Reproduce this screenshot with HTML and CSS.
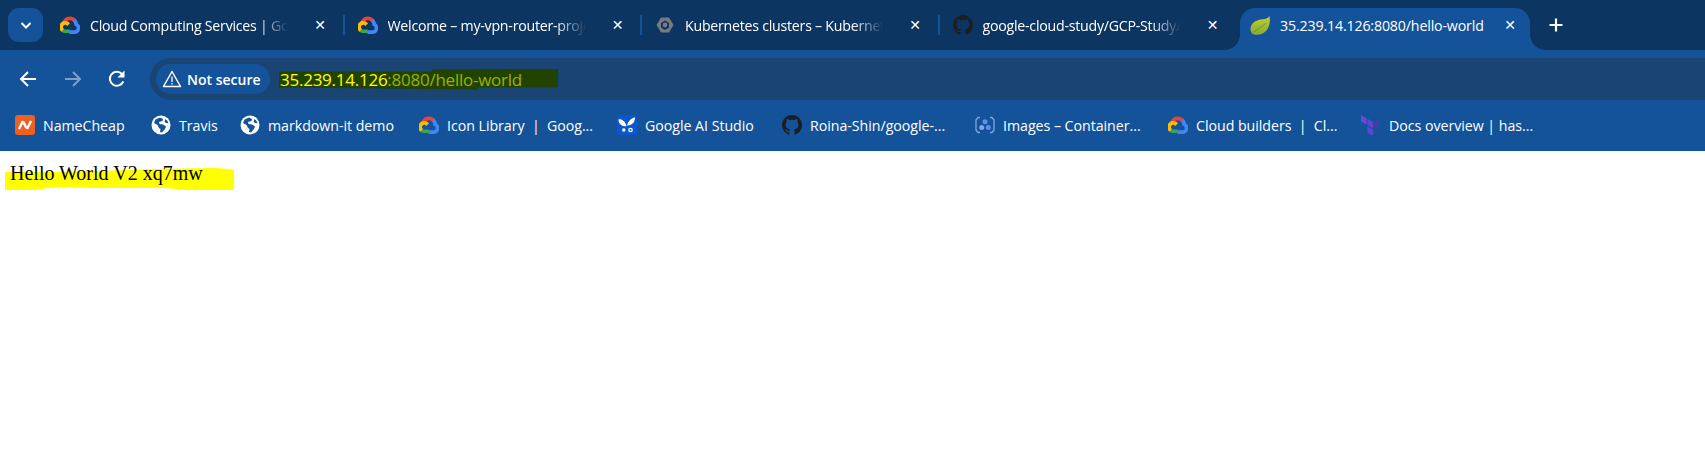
FILE: index.html
```html
<!DOCTYPE html>
<html lang="en">
<head>
<meta charset="utf-8">
<title>35.239.14.126:8080/hello-world</title>
<link rel="stylesheet" href="styles.css">
</head>
<body>
<svg class="defs" width="0" height="0" aria-hidden="true">
  <defs>
    <symbol id="gcloud" viewBox="0 0 20 20">
      <path d="M12.6 6.3l.9 0 1.9-1.900.1-.8A8.300 8.300 0 0 0 2 7.600c.2-.1.7 0 .7 0l3.700-.6s.2-.3.3-.3a4.600 4.600 0 0 1 5.900-.4z" fill="#ea4335"/>
      <path d="M17.900 7.800a8.300 8.300 0 0 0-2.500-4l-2.700 2.700a4.600 4.600 0 0 1 1.700 3.700v.5a2.300 2.300 0 1 1 0 4.600H9.800l-.5.500v2.800l.5.500h4.600a6 6 0 0 0 3.500-10.800z" fill="#4285f4"/>
      <path d="M5.200 18.100h4.600v-3.700H5.200a2.300 2.300 0 0 1-1-.2l-.6.200-1.900 1.800-.2.600a6 6 0 0 0 3.700 1.300z" fill="#34a853"/>
      <path d="M5.200 6.100a6 6 0 0 0-3.700 10.700l2.700-2.700a2.300 2.300 0 1 1 3.100-3.100l2.700-2.700a6 6 0 0 0-4.800-2.200z" fill="#fbbc05"/>
    </symbol>
    <symbol id="globe" viewBox="0 0 20 20">
      <circle cx="10" cy="10" r="9.500" fill="#fff"/>
      <path d="M9 2.500 4.500 4.500 3 8l3.500 2 1.500 3 1.500 1L9 17l2 .5 3-3.500 1-2.500-3-2-3.500-.5L8 7l3.500-1 .5-2zM14.500 4l-1 2.500 1.500 1.500 2.500.2A8 8 0 0 0 14.500 4z" fill="#14539a"/>
    </symbol>
    <symbol id="github" viewBox="0 0 16 16">
      <path fill="#1b1f24" d="M8 0C3.580 0 0 3.580 0 8c0 3.540 2.290 6.530 5.470 7.590.4.070.55-.17.55-.38 0-.19-.01-.82-.01-1.490-2.010.37-2.530-.49-2.690-.94-.09-.23-.48-.94-.82-1.130-.28-.15-.68-.52-.01-.53.63-.01 1.080.58 1.230.82.720 1.210 1.870.87 2.330.66.070-.52.280-.87.510-1.070-1.780-.2-3.640-.89-3.640-3.950 0-.87.310-1.590.820-2.150-.08-.2-.36-1.020.08-2.120 0 0 .67-.21 2.200.82a7.500 7.500 0 0 1 4 0c1.530-1.040 2.200-.82 2.200-.82.440 1.100.16 1.920.08 2.120.51.560.82 1.270.82 2.150 0 3.070-1.870 3.750-3.650 3.950.29.250.54.730.54 1.480 0 1.070-.01 1.930-.01 2.200 0 .21.150.46.550.38A8.010 8.010 0 0 0 16 8c0-4.420-3.580-8-8-8z"/>
    </symbol>
  </defs>
</svg>

<header class="chrome">
  <div class="tabstrip">
    <button class="tab-menu" aria-label="Search tabs">
      <svg width="14" height="14" viewBox="0 0 14 14"><path d="M2.500 5l4.500 4.500L11.500 5" fill="none" stroke="#fff" stroke-width="2"/></svg>
    </button>
    <div class="tab tab-sep">
      <svg class="favicon"><use href="#gcloud"/></svg>
      <span class="tab-title">Cloud Computing Services | Goo</span>
      <span class="tab-close">✕</span>
    </div>
    <div class="tab tab-sep">
      <svg class="favicon"><use href="#gcloud"/></svg>
      <span class="tab-title">Welcome – my-vpn-router-proje</span>
      <span class="tab-close">✕</span>
    </div>
    <div class="tab tab-sep">
      <svg class="favicon" viewBox="0 0 20 20"><path d="M6 2.500h8l4.500 7.500-4.500 7.500H6L1.500 10z" fill="#77797c"/><path d="M10 5.500 14 8v4.500L10 15l-4-2.500V8z" fill="#0d3562"/><circle cx="10" cy="10" r="2.400" fill="#77797c"/></svg>
      <span class="tab-title">Kubernetes clusters – Kubernete</span>
      <span class="tab-close">✕</span>
    </div>
    <div class="tab">
      <svg class="favicon"><use href="#github"/></svg>
      <span class="tab-title">google-cloud-study/GCP-Study/</span>
      <span class="tab-close">✕</span>
    </div>
    <div class="tab tab-active">
      <svg class="favicon" viewBox="0 0 20 20"><defs><linearGradient id="leaf" x1="0" y1="0" x2="0" y2="1"><stop offset="0" stop-color="#c2cf2e"/><stop offset="1" stop-color="#86ad33"/></linearGradient></defs><path d="M19.500 1C18 3.500 15.500 4 12.500 4.300 6 4.800 1 8 .500 13.500c-.2 2 .5 3.500 1.500 5 1.500 1 3.500 1.500 6 1.200C15 19 19 14 19.800 7c.2-2 .1-4-.3-6z" fill="url(#leaf)"/><path d="M3 17.500C7 14 11 13 16 8" fill="none" stroke="#6f9626" stroke-width="1"/></svg>
      <span class="tab-title">35.239.14.126:8080/hello-world</span>
      <span class="tab-close">✕</span>
    </div>
    <button class="new-tab" aria-label="New tab">
      <svg width="16" height="16" viewBox="0 0 16 16"><path d="M8 1.500v13M1.500 8h13" stroke="#fff" stroke-width="2.200"/></svg>
    </button>
  </div>

  <div class="toolbar">
    <button class="nav-btn" aria-label="Back">
      <svg width="20" height="20" viewBox="0 0 20 20"><path d="M18 10H3M10 3l-7 7 7 7" fill="none" stroke="#fff" stroke-width="2"/></svg>
    </button>
    <button class="nav-btn" aria-label="Forward">
      <svg width="20" height="20" viewBox="0 0 20 20"><path d="M2 10h15M10 3l7 7-7 7" fill="none" stroke="#7f9fc6" stroke-width="2"/></svg>
    </button>
    <button class="nav-btn" aria-label="Reload">
      <svg width="20" height="20" viewBox="0 0 20 20"><path d="M16.300 12.500A7 7 0 1 1 15 5l1.500 1.500" fill="none" stroke="#fff" stroke-width="2"/><path d="M17.500 1.500v7h-7z" fill="#fff"/></svg>
    </button>
    <div class="omnibox">
      <div class="chip">
        <svg width="20" height="18" viewBox="0 0 20 18"><path d="M10 1.500 18.500 16.500h-17z" fill="none" stroke="#fff" stroke-width="1.500" stroke-linejoin="round"/><path d="M10 6.500v5.500M10 13v1.500" stroke="#fff" stroke-width="1.300"/></svg>
        <span>Not secure</span>
      </div>
      <div class="url"><span class="url-host">35.239.14.126</span><span class="url-rest">:8080/hello-world</span></div>
    </div>
  </div>

  <nav class="bookmarks">
    <a class="bm bm-1">
      <svg class="favicon" viewBox="0 0 20 20"><rect width="20" height="20" rx="3" fill="#ee6021"/><path d="M4 14 7.500 7c1 0 1.500.5 2 2l1 2.500c.5 1 1 1.500 2 1.500L16 6" fill="none" stroke="#fff" stroke-width="2.400"/></svg>
      <span>NameCheap</span>
    </a>
    <a class="bm bm-2"><svg class="favicon"><use href="#globe"/></svg><span>Travis</span></a>
    <a class="bm bm-3"><svg class="favicon"><use href="#globe"/></svg><span>markdown-it demo</span></a>
    <a class="bm bm-4"><svg class="favicon"><use href="#gcloud"/></svg><span>Icon Library &nbsp;|&nbsp; Goog...</span></a>
    <a class="bm bm-5">
      <svg class="favicon" viewBox="0 0 20 20"><rect width="20" height="20" rx="2" fill="#0b57d0"/><path d="M1.500 4.500c2.500-1 6.500 1 8 6.500-2.500 1-5.500-.5-6.800-2.500C2 7.500 1.500 6 1.500 4.500zM18 2.500c-3.500.5-6.500 3-8 8 3 0 6-1.500 7.200-4 .6-1.300.8-2.800.8-4z" fill="#fff"/><circle cx="6.800" cy="15" r="1.700" fill="#fff"/><circle cx="13.500" cy="15" r="1.700" fill="none" stroke="#fff" stroke-width="1.300"/></svg>
      <span>Google AI Studio</span>
    </a>
    <a class="bm bm-6"><svg class="favicon"><use href="#github"/></svg><span>Roina-Shin/google-...</span></a>
    <a class="bm bm-7">
      <svg class="favicon" viewBox="0 0 20 20"><path d="M5 2.500H3L1 5v10l2 2.500h2M15 2.500h2L19 5v10l-2 2.500h-2" fill="none" stroke="#7fa6e8" stroke-width="1.300"/><circle cx="10" cy="6.800" r="2.500" fill="#5f8fe6"/><circle cx="6.700" cy="12.600" r="2.500" fill="#7fa6ea"/><circle cx="13.300" cy="12.600" r="2.500" fill="#5f8fe6"/></svg>
      <span>Images – Container...</span>
    </a>
    <a class="bm bm-8"><svg class="favicon"><use href="#gcloud"/></svg><span>Cloud builders &nbsp;|&nbsp; Cl...</span></a>
    <a class="bm bm-9">
      <svg class="favicon" viewBox="0 0 20 20"><path d="M0 0l5.500 3.200v6.400L0 6.400z" fill="#6a45e0"/><path d="M6.500 3.800 12 7v6.400L6.500 10.200z" fill="#5a48d0"/><path d="M13 7l5.500-3.200v6.400L13 13.400z" fill="#3f3fa8"/><path d="M6.500 11.500 12 14.700V21l-5.500-3.200z" fill="#5a48d0"/></svg>
      <span>Docs overview | has...</span>
    </a>
  </nav>
</header>

<main class="page">
  <p class="hello"><svg class="marker" width="229" height="22" viewBox="0 0 229 22" aria-hidden="true"><path d="M0 4 50 4 90 3 125 2 150 1 210 0 224 1 229 2 229 22 180 22 160 20 120 20 85 20 50 19 30 22 0 22z" fill="#ffff00"/></svg><span class="hello-text">Hello World V2 xq7mw</span></p>
</main>
</body>
</html>
```
FILE: styles.css
```css
* { box-sizing: border-box; }
html, body { margin: 0; height: 100%; overflow: hidden; background: #fff; }
.defs { position: absolute; }
button { border: 0; padding: 0; background: none; display: flex; align-items: center; justify-content: center; }

.chrome { font-family: "Open Sans", "Noto Sans", sans-serif; color: #fff; background: #14539a; height: 151px; display: flex; flex-direction: column; }

.tabstrip { height: 50px; background: #0d3562; display: flex; align-items: flex-start; padding: 8px 0 0 8px; }
.tab-menu { width: 35px; height: 34px; border-radius: 11px; background: #14539a; margin-right: 3px; }

.tab { position: relative; width: 297.5px; height: 42px; flex: none; display: flex; align-items: center; padding: 0 13.5px 8px 14px; }
.tab-sep::after { content: ""; position: absolute; right: -1px; top: 7px; width: 2px; height: 20px; background: #14539a; }
.favicon { width: 20px; height: 20px; flex: none; }
.tab-title { flex: 1; margin-left: 10px; font-size: 14.2px; letter-spacing: -0.25px; white-space: nowrap; overflow: hidden; -webkit-mask-image: linear-gradient(to left, transparent 12px, #000 42px); mask-image: linear-gradient(to left, transparent 12px, #000 42px); }
.tab-close { width: 20px; margin-left: 10px; font-size: 14px; line-height: 1; font-weight: 700; text-align: center; font-family: "DejaVu Sans", sans-serif; }

.tab-active { background: #14539a; border-radius: 15px 15px 0 0; width: 290px; margin-left: 4px; padding-left: 10px; padding-right: 10px; }
.tab-active .tab-title { -webkit-mask-image: none; mask-image: none; letter-spacing: -0.15px; }
.tab-active::before, .tab-active::after { content: ""; position: absolute; bottom: 0; width: 15px; height: 15px; }
.tab-active::before { left: -15px; background: radial-gradient(circle at 0 0, transparent 14.500px, #14539a 15px); }
.tab-active::after { right: -15px; background: radial-gradient(circle at 100% 0, transparent 14.500px, #14539a 15px); }

.new-tab { width: 34px; height: 34px; margin-left: 9px; }

.toolbar { height: 50px; display: flex; align-items: flex-end; padding-left: 6px; }
.nav-btn { width: 44.5px; height: 42px; flex: none; }
.omnibox { flex: 1; height: 42px; margin-left: 10.500px; background: #1a4474; border-radius: 21px 0 0 21px; display: flex; align-items: center; padding-left: 6px; }
.chip { width: 114px; height: 30px; border-radius: 15px; background: #14539a; display: flex; align-items: center; gap: 5px; padding-left: 6px; font-size: 14px; font-weight: 600; flex: none; }
.url { margin-left: 9px; height: 21px; width: 279px; padding-left: 1px; line-height: 21px; font-size: 17px; letter-spacing: -0.25px; background: #224200; white-space: nowrap; clip-path: polygon(0 3px, 55% 3px, 55% 1px, 100% 0, 100% 19px, 71% 19px, 71% 21px, 0 19px); }
.url-host { color: #ffff00; }
.url-rest { color: #99b300; }

.bookmarks { height: 50px; display: flex; align-items: center; padding-left: 15px; font-size: 14.2px; letter-spacing: -0.03px; }
.bm { display: flex; align-items: center; gap: 8px; white-space: nowrap; flex: none; }
.bm-1 { width: 136px; }
.bm-2 { width: 89px; }
.bm-3 { width: 179px; }
.bm-4 { width: 198px; }
.bm-5 { width: 165px; }
.bm-6 { width: 193px; }
.bm-7 { width: 193px; }
.bm-8 { width: 193px; }

.page { position: relative; }
.hello { position: relative; margin: 0; padding: 11px 0 0 10px; font: 20px/23px "Liberation Serif", "Times New Roman", serif; color: #000; }
.marker { position: absolute; left: 5px; top: 17px; }
.hello-text { position: relative; }
```
